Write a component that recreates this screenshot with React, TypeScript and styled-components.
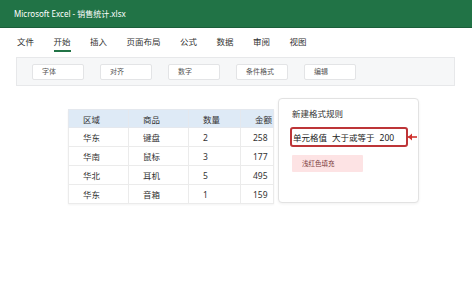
import styled, { createGlobalStyle } from "styled-components";

const GlobalStyle = createGlobalStyle`
  html, body {
    margin: 0;
    padding: 0;
    background: #ffffff;
  }
  body {
    font-family: "Noto Sans", "Noto Sans CJK SC", sans-serif;
    color: #333333;
  }
`;

const Window = styled.div`
  width: 472px;
  height: 288px;
  display: flex;
  flex-direction: column;
  overflow: hidden;
`;

const TitleBar = styled.div`
  height: 27px;
  background: #217346;
  border-bottom: 1px solid #1b5e3a;
  display: flex;
  align-items: center;
  padding-left: 14px;
  color: #ffffff;
  font-size: 8px;
`;

const TabBar = styled.div`
  height: 29px;
  box-sizing: border-box;
  display: flex;
  gap: 19.5px;
  padding: 7px 0 0 17px;
`;

const Tab = styled.div<{ $active?: boolean }>`
  font-size: 8.5px;
  line-height: 14px;
  height: 14px;
  padding-bottom: 1px;
  color: #333333;
  border-bottom: 2px solid ${(p) => (p.$active ? "#217346" : "transparent")};
`;

const Ribbon = styled.div`
  margin: 0 17px 0 16px;
  height: 29px;
  box-sizing: border-box;
  background: #f6f7f8;
  border: 1px solid #e7e8ea;
  display: flex;
  align-items: center;
  gap: 16px;
  padding: 0 15px;
`;

const RibbonButton = styled.div`
  width: 52px;
  height: 16px;
  box-sizing: border-box;
  background: #ffffff;
  border: 1px solid #e3e4e6;
  border-radius: 2px;
  padding-left: 9px;
  font-size: 7px;
  line-height: 14px;
  color: #555555;
`;

const Content = styled.div`
  display: flex;
  align-items: flex-start;
  gap: 4px;
  padding-left: 68px;
`;

const Sheet = styled.table`
  margin-top: 23px;
  border-collapse: collapse;
  font-size: 8.5px;
  color: #333333;
  box-shadow: 0 1px 2px rgba(0, 0, 0, 0.05);
`;

const HeadCell = styled.th<{ $w: number }>`
  width: ${(p) => p.$w}px;
  height: 18px;
  box-sizing: border-box;
  padding: 0 0 0 14px;
  text-align: left;
  font-weight: normal;
  background: #deeaf6;
  border: 1px solid #e4e8ee;
`;

const Cell = styled.td<{ $pad?: number }>`
  height: 19px;
  box-sizing: border-box;
  padding: 0 0 0 ${(p) => p.$pad ?? 14}px;
  border: 1px solid #ebebeb;
  background: #ffffff;
`;

const RulePanel = styled.div`
  position: relative;
  margin-top: 12px;
  width: 141px;
  height: 105px;
  box-sizing: border-box;
  border: 1px solid #e2e2e2;
  border-radius: 4px;
  background: #ffffff;
  box-shadow: 0 1px 3px rgba(0, 0, 0, 0.06);
  padding: 8px 11px 0 13px;
  display: flex;
  flex-direction: column;
  align-items: flex-start;
`;

const PanelTitle = styled.div`
  font-size: 8.5px;
  line-height: 14px;
  color: #333333;
`;

const ConditionRow = styled.div`
  position: relative;
  margin: 6px 0 0 -2px;
  width: 118px;
  height: 20px;
  box-sizing: border-box;
  border: 2px solid #bd3538;
  border-radius: 3px;
  padding-left: 1px;
  display: flex;
  align-items: center;
  gap: 5px;
  font-size: 8.5px;
  color: #222222;
  white-space: nowrap;
`;

const Arrow = styled.svg`
  position: absolute;
  left: 115px;
  top: 3px;
`;

const FillSample = styled.div`
  margin-top: 8px;
  width: 71px;
  height: 17px;
  box-sizing: border-box;
  background: #fde3e4;
  border-radius: 1px;
  padding-left: 10px;
  font-size: 6.5px;
  line-height: 17px;
  color: #7a3a3a;
`;

const tabs = ["文件", "开始", "插入", "页面布局", "公式", "数据", "审阅", "视图"];
const groups = ["字体", "对齐", "数字", "条件格式", "编辑"];
const rows = [
  ["华东", "键盘", "2", "258"],
  ["华南", "鼠标", "3", "177"],
  ["华北", "耳机", "5", "495"],
  ["华东", "音箱", "1", "159"],
];

export default function App() {
  return (
    <>
      <GlobalStyle />
      <Window>
        <TitleBar>Microsoft Excel - 销售统计.xlsx</TitleBar>
        <TabBar>
          {tabs.map((t) => (
            <Tab key={t} $active={t === "开始"}>
              {t}
            </Tab>
          ))}
        </TabBar>
        <Ribbon>
          {groups.map((g) => (
            <RibbonButton key={g}>{g}</RibbonButton>
          ))}
        </Ribbon>
        <Content>
          <Sheet>
            <thead>
              <tr>
                <HeadCell $w={60}>区域</HeadCell>
                <HeadCell $w={60}>商品</HeadCell>
                <HeadCell $w={52}>数量</HeadCell>
                <HeadCell $w={33}>金额</HeadCell>
              </tr>
            </thead>
            <tbody>
              {rows.map((r, i) => (
                <tr key={i}>
                  {r.map((c, j) => (
                    <Cell key={j} $pad={j === 3 ? 12 : 14}>
                      {c}
                    </Cell>
                  ))}
                </tr>
              ))}
            </tbody>
          </Sheet>
          <RulePanel>
            <PanelTitle>新建格式规则</PanelTitle>
            <ConditionRow>
              <span>单元格值</span>
              <span>大于或等于</span>
              <span>200</span>
              <Arrow width="11" height="10" viewBox="0 0 11 10">
                <path d="M1 5 L10 5" stroke="#d0312d" strokeWidth="1.6" />
                <path d="M1 5 L5 1.5 L5 8.5 Z" fill="#d0312d" />
              </Arrow>
            </ConditionRow>
            <FillSample>浅红色填充</FillSample>
          </RulePanel>
        </Content>
      </Window>
    </>
  );
}
